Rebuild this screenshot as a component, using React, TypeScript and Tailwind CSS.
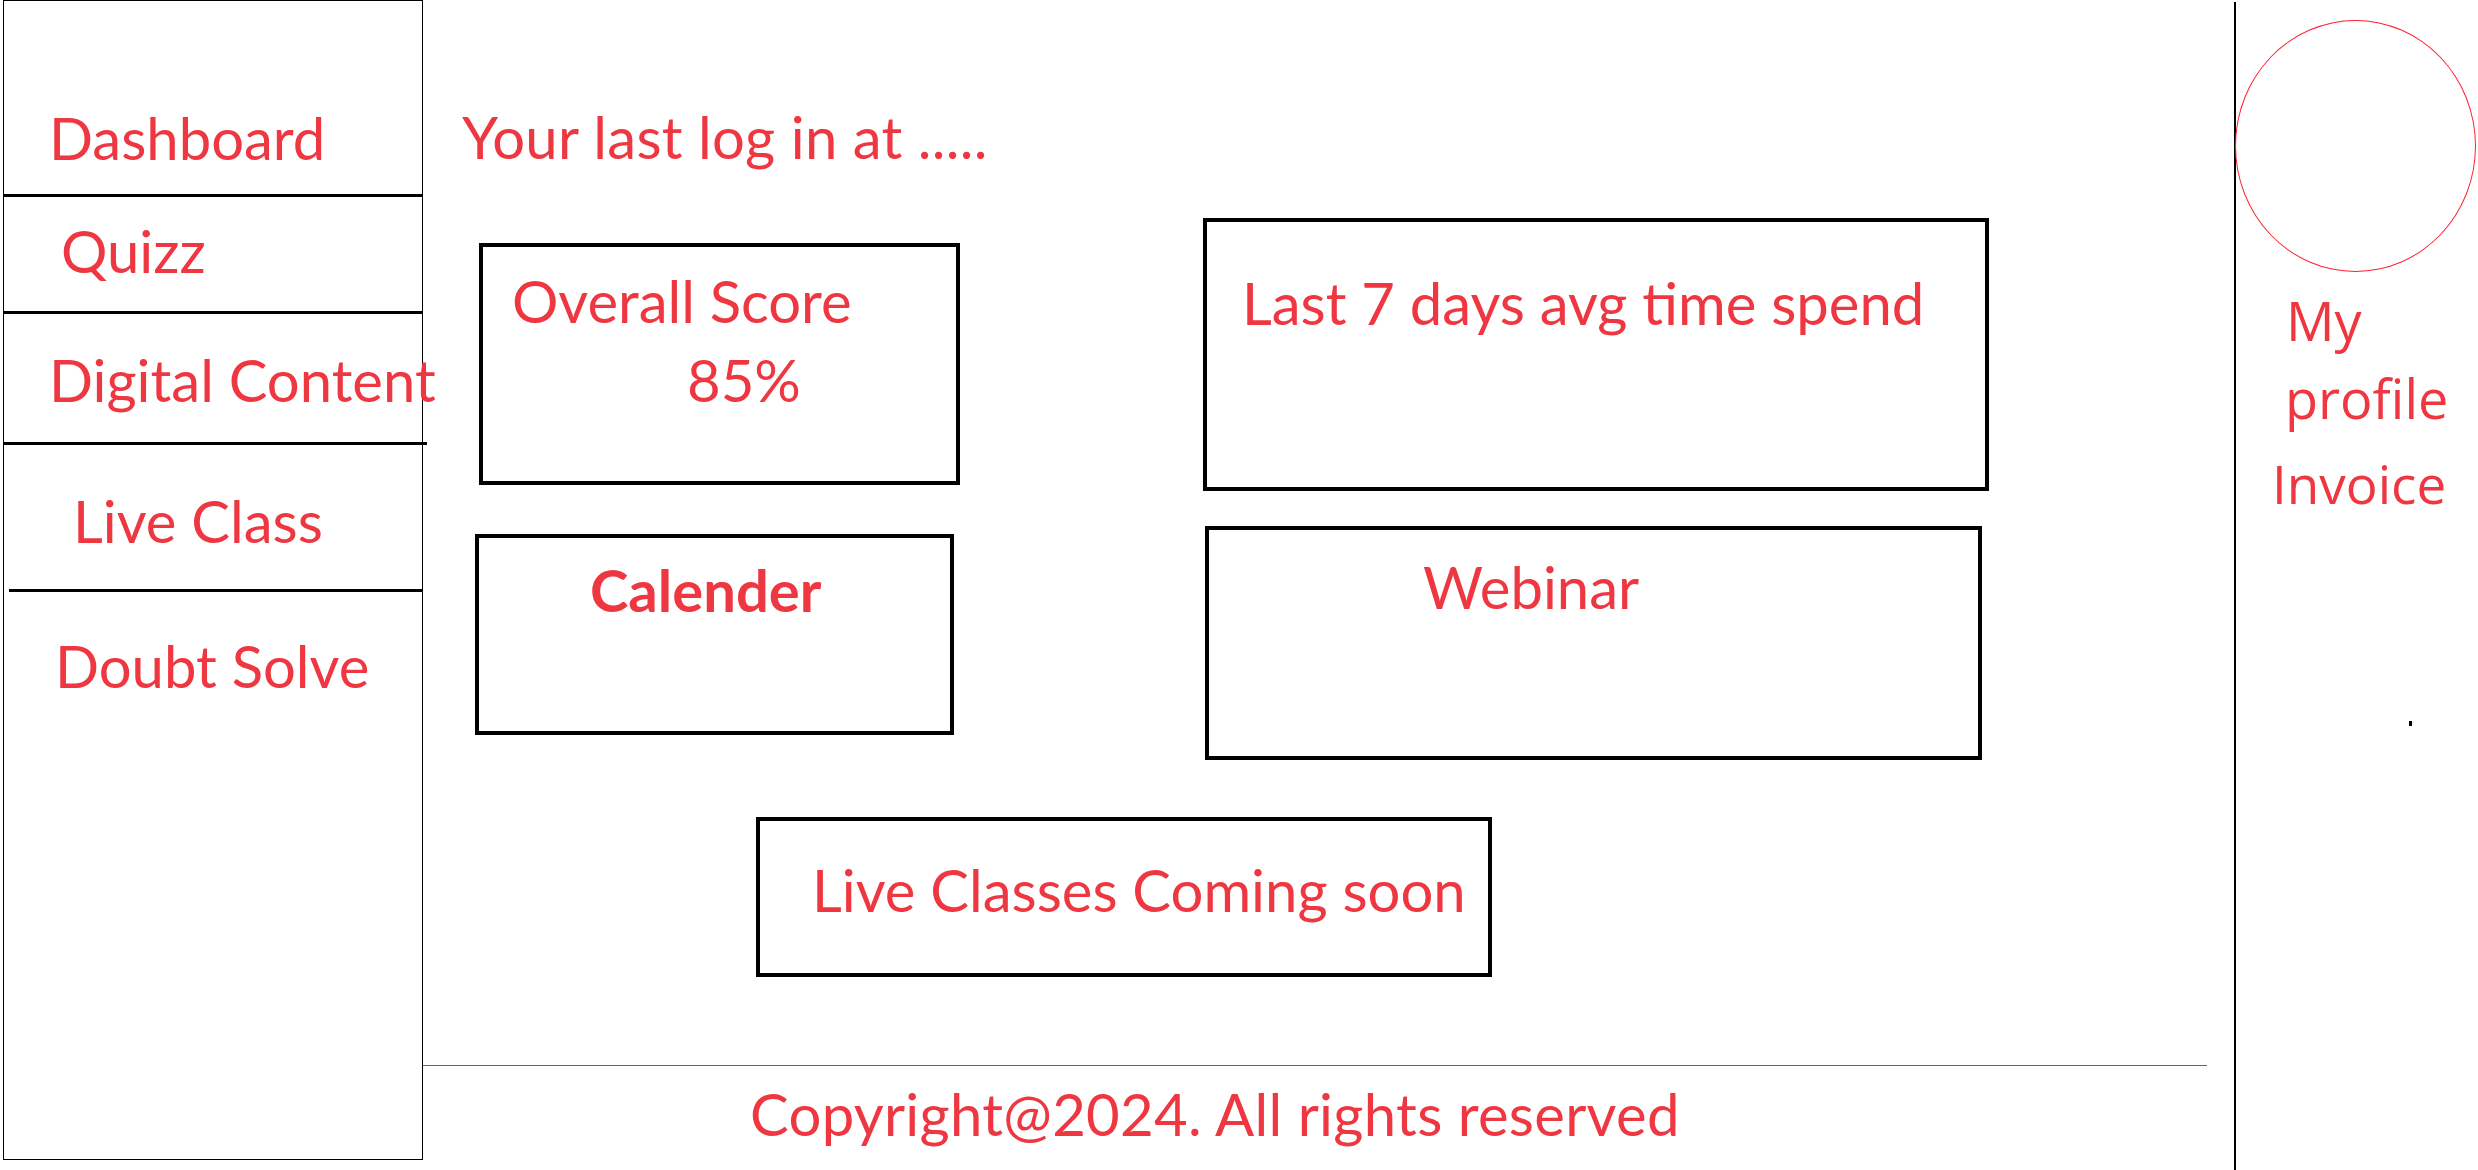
import React from 'react';

const red = 'text-[#ee3741]';

export default function App() {
  return (
    <div className="w-[2478px] h-[1170px] flex bg-white overflow-hidden font-['Lato',_sans-serif]">
      {/* Sidebar */}
      <aside className="ml-[3px] w-[420px] h-[1160px] shrink-0 border border-black flex flex-col">
        <div className="h-[193px] pt-[108px] pl-[45px]">
          <p className={`text-[58px] leading-none ${red}`}>Dashboard</p>
        </div>
        <div className="h-[3px] bg-black" />
        <div className="h-[114px] pt-[25px] pl-[57px]">
          <p className={`text-[58px] leading-none ${red}`}>Quizz</p>
        </div>
        <div className="h-[3px] bg-black w-[418px]" />
        <div className="h-[128px] pt-[37px] pl-[45px]">
          <p className={`text-[58px] leading-none whitespace-nowrap ${red}`}>Digital Content</p>
        </div>
        <div className="h-[3px] bg-black w-[423px]" />
        <div className="h-[144px] pt-[47px] pl-[69px]">
          <p className={`text-[58px] leading-none ${red}`}>Live Class</p>
        </div>
        <div className="h-[3px] bg-black ml-[5px]" />
        <div className="pt-[45px] pl-[51px]">
          <p className={`text-[58px] leading-none ${red}`}>Doubt Solve</p>
        </div>
      </aside>

      {/* Main */}
      <main className="flex-1 flex flex-col">
        <p className={`pt-[108px] pl-[39px] text-[58px] leading-none tracking-[0.3px] ${red}`}>Your last log in at .....</p>

        <div className="flex items-start">
          <div className="flex flex-col ml-[56px] mt-[77px]">
            <div className="w-[481px] h-[242px] border-[4px] border-black pt-[25px] pl-[29px]">
              <p className={`text-[58px] leading-none ${red}`}>Overall Score</p>
              <p className={`mt-[21px] pl-[175px] text-[58px] leading-none ${red}`}>85%</p>
            </div>
            <div className="w-[479px] h-[201px] -ml-[4px] mt-[49px] border-[4px] border-black pt-[23px] pl-[111px]">
              <p className={`text-[58px] font-bold leading-none ${red}`}>Calender</p>
            </div>
          </div>

          <div className="flex flex-col ml-[243px] mt-[52px]">
            <div className="w-[786px] h-[273px] border-[4px] border-black pt-[52px] pl-[35px]">
              <p className={`text-[58px] leading-none whitespace-nowrap ${red}`}>Last 7 days avg time spend</p>
            </div>
            <div className="w-[777px] h-[234px] ml-[2px] mt-[35px] border-[4px] border-black pt-[28px] pl-[214px]">
              <p className={`text-[58px] leading-none ${red}`}>Webinar</p>
            </div>
          </div>
        </div>

        <div className="w-[736px] h-[160px] ml-[333px] mt-[57px] border-[4px] border-black pt-[40px] pl-[52px]">
          <p className={`text-[58px] leading-none whitespace-nowrap ${red}`}>Live Classes Coming soon</p>
        </div>

        {/* Footer */}
        <div className="w-[1784px] h-px bg-[#ff1f2f] mt-[88px]" />
        <p className={`mt-[19px] pl-[327px] text-[58px] leading-none whitespace-nowrap tracking-[0.3px] ${red}`}>
          Copyright@2024. All rights reserved
        </p>
      </main>

      {/* Profile panel */}
      <aside className="w-[244px] shrink-0 mt-[2px] border-l-2 border-black flex flex-col font-['Open_Sans',_sans-serif]">
        <div className="w-[241px] h-[252px] mt-[18px] -ml-[1px] rounded-[50%] border border-[#ff1f2f]" />
        <p className={`mt-[21px] pl-[50px] text-[54px] leading-none ${red}`}>My</p>
        <p className={`mt-[24px] pl-[49px] text-[54px] leading-none ${red}`}>profile</p>
        <p className={`mt-[32px] pl-[36px] text-[53px] leading-none ${red}`}>Invoice</p>
        <div className="w-[3px] h-[5px] bg-black mt-[211px] ml-[173px]" />
      </aside>
    </div>
  );
}
